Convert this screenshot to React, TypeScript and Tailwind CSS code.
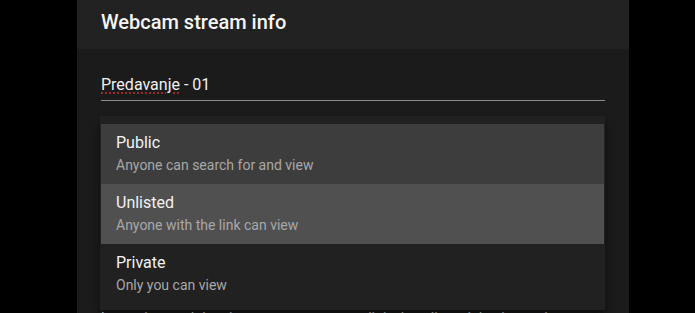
const options = [
  { title: 'Public', subtitle: 'Anyone can search for and view', bg: 'bg-[#3d3d3d]' },
  { title: 'Unlisted', subtitle: 'Anyone with the link can view', bg: 'bg-[#505050]' },
  { title: 'Private', subtitle: 'Only you can view', bg: 'bg-[#212121]' },
]

export default function App() {
  return (
    <div
      className="h-[313px] w-full overflow-hidden bg-black"
      style={{ fontFamily: 'Roboto, "Noto Sans", sans-serif' }}
    >
      <div className="ml-[77px] w-[552px] h-full flex flex-col">
        <div className="h-[49px] shrink-0 bg-[#222222] px-6 pt-[8px]">
          <h2 className="text-[20px] leading-[28px] font-medium text-[#f5f5f5]">
            Webcam stream info
          </h2>
        </div>

        <div className="relative grow bg-[#1b1b1b] px-6 pt-[24px]">
          <div className="border-b border-[#8a8a8a] pb-[3px] text-[16px] leading-[24px] text-[#f0f0f0]">
            <span className="underline decoration-dotted decoration-[#c62828] underline-offset-[3px]">
              Predavanje
            </span>{' '}
            - 01
          </div>

          <div className="mt-[15px] h-[56px] border-b border-[#8a8a8a] bg-[#1f1f1f]" />

          <p className="mt-[136px] text-[14px] leading-[20px] text-[#e0e0e0] whitespace-nowrap">
            Lorem ipsum dolor sit amet, consectetur adipiscing elit, sed do eiusmod tempor
          </p>

          <div className="absolute left-[23px] top-[67px] w-[505px] bg-[#212121] px-[1px] pt-[8px] pb-[6px] shadow-[0_5px_5px_-3px_rgba(0,0,0,0.4),0_8px_10px_1px_rgba(0,0,0,0.3)]">
            {options.map((o) => (
              <div key={o.title} className={`h-[60px] px-[15px] pt-[7px] ${o.bg}`}>
                <div className="text-[16px] leading-[24px] text-[#f2f2f2]">{o.title}</div>
                <div className="text-[14px] leading-[20px] text-[#a8a8a8]">{o.subtitle}</div>
              </div>
            ))}
          </div>
        </div>
      </div>
    </div>
  )
}
